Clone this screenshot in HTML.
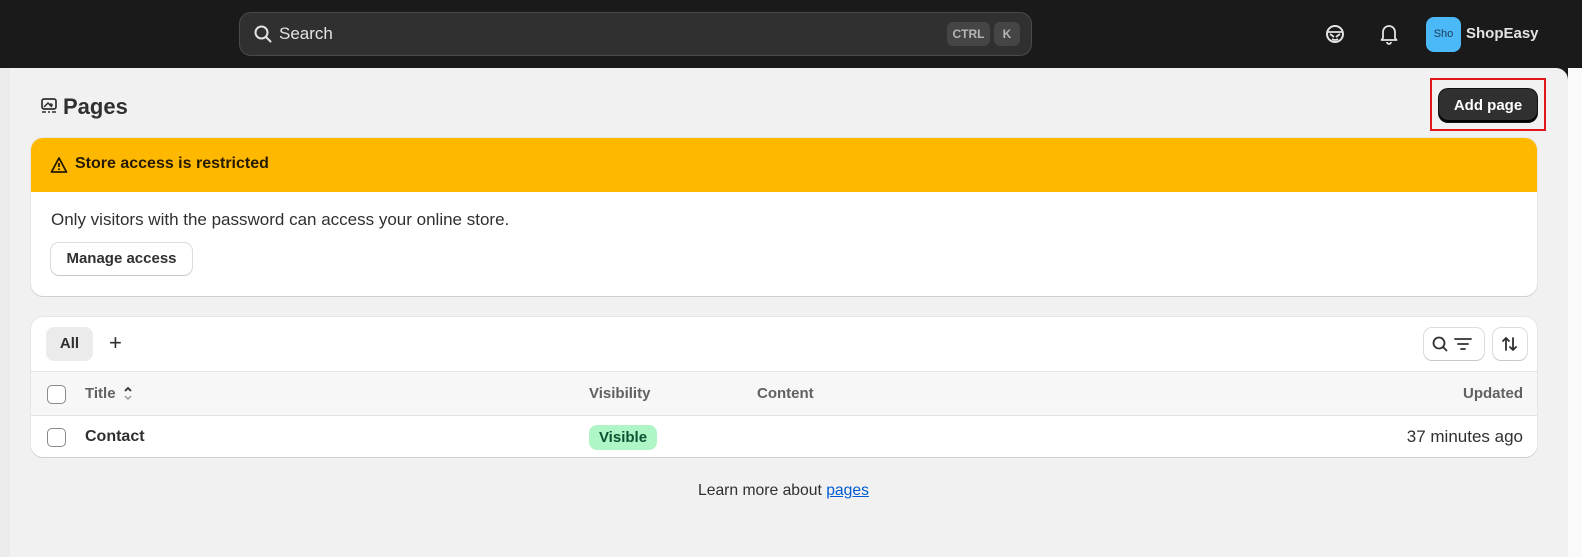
<!DOCTYPE html>
<html><head><meta charset="utf-8"><style>
*{box-sizing:border-box;margin:0;padding:0}
body{width:1582px;height:557px;background:#1a1a1a;font-family:"Liberation Sans",sans-serif;position:relative;overflow:hidden;color:#303030}
.abs{position:absolute}
.main{left:0;top:68px;width:1568px;height:489px;background:#f1f1f1;border-top-right-radius:12px}
.strip{left:1568px;top:68px;width:14px;height:489px;background:#fafafa}
.search{left:239px;top:12px;width:793px;height:44px;background:#303030;border:1px solid #4a4a4a;border-radius:12px}
.kbd{top:22px;height:24px;background:#454545;border-radius:6px;color:#b5b5b5;font-size:12px;font-weight:bold;line-height:24px;text-align:center}
.card{background:#fff;border-radius:12px;box-shadow:0 1px 0 #d0d0d0,0 0 0 1px #e6e6e6}
.btn{background:#fff;border-radius:8px;box-shadow:0 1px 0 #c9c9c9,0 0 0 1px #dcdcdc;font-size:15px;font-weight:bold;text-align:center}
.cb{width:19px;height:19px;border:1.5px solid #8a8a8a;border-radius:5px;background:#fff}
.th{font-size:15px;font-weight:bold;color:#616161}
</style></head><body>
<div class="abs search"></div>
<svg class="abs" style="left:253px;top:24px" width="20" height="20" viewBox="0 0 20 20"><circle cx="8.5" cy="8.5" r="6" fill="none" stroke="#e3e3e3" stroke-width="2"/><path d="M13 13l4.5 4.5" stroke="#e3e3e3" stroke-width="2" stroke-linecap="round"/></svg>
<div class="abs" style="left:279px;top:24px;color:#e3e3e3;font-size:17px">Search</div>
<div class="abs kbd" style="left:947px;width:43px">CTRL</div>
<div class="abs kbd" style="left:994px;width:26px">K</div>
<svg class="abs" style="left:1324px;top:23px" width="22" height="22" viewBox="0 0 22 22"><circle cx="11" cy="11" r="8" fill="none" stroke="#e3e3e3" stroke-width="2"/><path d="M4 9h14M6 11l4 3M16 11l-4 3M8 16q3 2 6 0" stroke="#e3e3e3" stroke-width="1.8" fill="none"/></svg>
<svg class="abs" style="left:1379px;top:23px" width="20" height="22" viewBox="0 0 20 22"><path d="M4 15V9a6 6 0 0112 0v6l1.5 2h-15z M8 19a2 2 0 004 0" fill="none" stroke="#e3e3e3" stroke-width="1.8" stroke-linejoin="round"/></svg>
<div class="abs" style="left:1426px;top:17px;width:35px;height:35px;background:#4bb9f7;border-radius:8px;color:#1a3a5a;font-size:11px;line-height:35px;text-align:center">Sho</div>
<div class="abs" style="left:1466px;top:25px;color:#e3e3e3;font-size:15px;font-weight:bold">ShopEasy</div>

<div class="abs main"></div>
<div class="abs strip"></div>
<div class="abs" style="left:0;top:68px;width:10px;height:489px;background:#ebebeb"></div>
<svg class="abs" style="left:40px;top:97px" width="18" height="18" viewBox="0 0 18 18"><rect x="2" y="2" width="14" height="10" rx="2" fill="none" stroke="#303030" stroke-width="1.7"/><path d="M4 10l4-4 4 4M11 7a1 1 0 1 0 .1 0" stroke="#303030" stroke-width="1.5" fill="none"/><path d="M2 15h4M8 15h2M12 15h4" stroke="#303030" stroke-width="1.6"/></svg>
<div class="abs" style="left:63px;top:94px;font-size:22px;font-weight:bold;color:#303030">Pages</div>
<div class="abs" style="left:1430px;top:78px;width:116px;height:53px;border:2px solid #e0161c"></div>
<div class="abs" style="left:1439px;top:89px;width:98px;height:33px;background:#303030;border-radius:9px;box-shadow:inset 0 -2px 0 #000,0 0 0 1px #111;color:#fff;font-size:15px;font-weight:bold;line-height:33px;text-align:center">Add page</div>

<div class="abs card" style="left:31px;top:138px;width:1506px;height:158px;overflow:hidden">
<div style="height:54px;background:#ffb800;position:relative">
<svg class="abs" style="left:19px;top:18px" width="18" height="18" viewBox="0 0 18 18"><path d="M9 2L1.5 16h15z" fill="none" stroke="#251a00" stroke-width="1.8" stroke-linejoin="round"/><path d="M9 7v4" stroke="#251a00" stroke-width="1.8"/><circle cx="9" cy="13.3" r="1" fill="#251a00"/></svg>
<div class="abs" style="left:44px;top:17px;font-size:16px;font-weight:bold;color:#251a00">Store access is restricted</div>
</div>
<div class="abs" style="left:20px;top:72px;font-size:17px;color:#303030">Only visitors with the password can access your online store.</div>
<div class="abs btn" style="left:20px;top:105px;width:141px;height:32px;line-height:32px">Manage access</div>
</div>

<div class="abs card" style="left:31px;top:317px;width:1506px;height:140px;overflow:hidden">
<div class="abs" style="left:15px;top:10px;width:47px;height:34px;background:#ebebeb;border-radius:8px;font-size:15px;font-weight:bold;line-height:34px;text-align:center">All</div>
<div class="abs" style="left:78px;top:13px;font-size:22px;color:#303030">+</div>
<div class="abs btn" style="left:1393px;top:11px;width:60px;height:32px"></div>
<svg class="abs" style="left:1400px;top:17px" width="46" height="20" viewBox="0 0 46 20"><circle cx="8" cy="9" r="5.5" fill="none" stroke="#303030" stroke-width="1.8"/><path d="M12 13l3.5 3.5" stroke="#303030" stroke-width="1.8" stroke-linecap="round"/><path d="M24 5h16M27 10h10M30 15h4" stroke="#303030" stroke-width="1.8" stroke-linecap="round"/></svg>
<div class="abs btn" style="left:1462px;top:11px;width:34px;height:32px"></div>
<svg class="abs" style="left:1469px;top:17px" width="20" height="20" viewBox="0 0 20 20"><path d="M6 16V4M3 7l3-3 3 3M13 4v12M10 13l3 3 3-3" fill="none" stroke="#303030" stroke-width="1.8" stroke-linecap="round" stroke-linejoin="round"/></svg>
<div class="abs" style="left:0;top:54px;width:1506px;height:45px;background:#f7f7f7;border-top:1px solid #e3e3e3;border-bottom:1px solid #e3e3e3"></div>
<div class="abs cb" style="left:16px;top:68px"></div>
<div class="abs th" style="left:54px;top:68px">Title</div>
<svg class="abs" style="left:91px;top:68px" width="12" height="18" viewBox="0 0 12 18"><path d="M3 6l3-3 3 3" stroke="#303030" stroke-width="1.8" fill="none"/><path d="M3 11l3 3 3-3" stroke="#9a9a9a" stroke-width="1.5" fill="none"/></svg>
<div class="abs th" style="left:558px;top:68px">Visibility</div>
<div class="abs th" style="left:726px;top:68px">Content</div>
<div class="abs th" style="right:14px;top:68px">Updated</div>
<div class="abs cb" style="left:16px;top:111px"></div>
<div class="abs" style="left:54px;top:111px;font-size:16px;font-weight:bold">Contact</div>
<div class="abs" style="left:558px;top:108px;width:68px;height:25px;background:#aff5c5;border-radius:8px;color:#0c5132;font-size:15px;font-weight:bold;line-height:25px;text-align:center">Visible</div>
<div class="abs" style="right:14px;top:110px;font-size:17px">37 minutes ago</div>
</div>

<div class="abs" style="left:698px;top:482px;font-size:15.7px;color:#303030">Learn more about <span style="color:#005bd3;text-decoration:underline">pages</span></div>
</body></html>
